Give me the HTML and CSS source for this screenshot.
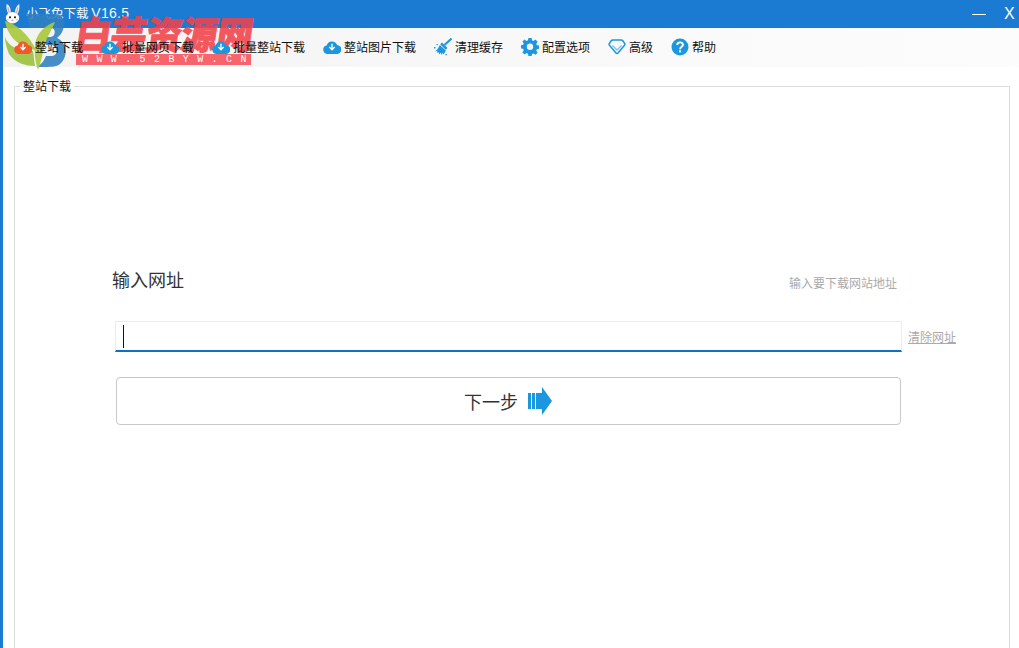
FILE: index.html
```html
<!DOCTYPE html>
<html lang="zh">
<head>
<meta charset="utf-8">
<title>小飞兔下载</title>
<link rel="stylesheet" href="styles.css">
</head>
<body>
<div class="app">
  <header class="titlebar">
    <div class="title-left">
      <svg class="rabbit" width="17" height="20" viewBox="0 0 20 24">
        <path d="M5 12C3 8 2 4 3 0c3 1 5 5 5 10zM13 10c0-4 2-8 5-10 1 4 0 9-2 12z" fill="#e8eef6"/>
        <path d="M4.500 4c.2 2 1 4.500 2 6.500M16.500 4c-.5 2-1 4.500-2 6.500" stroke="#d99bb0" stroke-width="1.300" fill="none"/>
        <ellipse cx="10" cy="16.500" rx="8" ry="7" fill="#fff"/>
        <circle cx="7" cy="16" r="1.300" fill="#222"/>
        <circle cx="13" cy="16" r="1.300" fill="#222"/>
        <ellipse cx="10" cy="19.500" rx="1.500" ry="1" fill="#e79ab0"/>
        <ellipse cx="4.500" cy="19" rx="1.500" ry="1" fill="#f4c6d2"/>
        <ellipse cx="15.500" cy="19" rx="1.500" ry="1" fill="#f4c6d2"/>
      </svg>
      <span class="title-text">小飞兔下载 <span class="title-ver">V16.5</span></span>
    </div>
    <div class="window-controls">
      <span class="minimize"></span>
      <span class="close">X</span>
    </div>
  </header>

  <div class="body-wrap">
    <nav class="toolbar">
      <a class="tool">
        <svg class="icon" width="18" height="14" viewBox="0 0 17 13"><path d="M4 13a4 4 0 0 1-.6-7.900A5.200 5.200 0 0 1 13.300 4.600 4.200 4.200 0 0 1 13 13z" fill="#ef5a2c"/><path d="M8.500 3.500v5M6 6.500l2.500 2.700L11 6.500" stroke="#fff" stroke-width="1.300" fill="none"/></svg>
        整站下载
      </a>
      <a class="tool">
        <svg class="icon" width="18" height="14" viewBox="0 0 17 13"><path d="M4 13a4 4 0 0 1-.6-7.900A5.200 5.200 0 0 1 13.300 4.600 4.200 4.200 0 0 1 13 13z" fill="#1b97e0"/><path d="M8.500 3.500v5M6 6.500l2.500 2.700L11 6.500" stroke="#fff" stroke-width="1.300" fill="none"/></svg>
        批量网页下载
      </a>
      <a class="tool">
        <svg class="icon" width="18" height="14" viewBox="0 0 17 13"><path d="M4 13a4 4 0 0 1-.6-7.900A5.200 5.200 0 0 1 13.300 4.600 4.200 4.200 0 0 1 13 13z" fill="#1b97e0"/><path d="M8.500 3.500v5M6 6.500l2.500 2.700L11 6.500" stroke="#fff" stroke-width="1.300" fill="none"/></svg>
        批量整站下载
      </a>
      <a class="tool">
        <svg class="icon" width="18" height="14" viewBox="0 0 17 13"><path d="M4 13a4 4 0 0 1-.6-7.900A5.200 5.200 0 0 1 13.300 4.600 4.200 4.200 0 0 1 13 13z" fill="#1b97e0"/><path d="M8.500 3.500v5M6 6.500l2.500 2.700L11 6.500" stroke="#fff" stroke-width="1.300" fill="none"/></svg>
        整站图片下载
      </a>
      <a class="tool">
        <svg class="icon" width="18" height="18" viewBox="0 0 18 18">
          <path d="M17.500 .5l-7 6.500" stroke="#1b97e0" stroke-width="2"/>
          <path d="M8 4.500l5.500 5.500-1.800 1.800-5.500-5.500z" fill="#1b97e0"/>
          <path d="M5.800 7l6 5.500c-.5 1.500-1.300 2.700-2.300 4l-1-2-.7 2.500-1.500-2.500-.6 2-1.500-2.500-1.400 1 .5-2.300L1 13.500C3 12 4.800 9.500 5.800 7z" fill="#1b97e0"/>
          <rect x="0" y="9" width="1.500" height="1.500" fill="#1b97e0"/>
          <rect x="2.500" y="6" width="1.300" height="1.300" fill="#1b97e0"/>
          <rect x="11.500" y="16" width="1.300" height="1.300" fill="#1b97e0"/>
        </svg>
        清理缓存
      </a>
      <a class="tool">
        <svg class="icon" width="18" height="18" viewBox="0 0 17 17"><path d="M7 0h3l.4 2.200 1.400.6L13.700 1.500l2 2-1.300 1.900.6 1.400 2 .4v3l-2 .4-.6 1.400 1.300 1.900-2 2-1.900-1.300-1.400.6L10 17H7l-.4-2.200-1.400-.6-1.900 1.300-2-2 1.300-1.900-.6-1.400L0 9.800v-3l2-.4.600-1.400L1.300 3.500l2-2 1.900 1.300 1.400-.6z" fill="#1b97e0"/><circle cx="8.500" cy="8.300" r="3" fill="#f6f6f6"/></svg>
        配置选项
      </a>
      <a class="tool">
        <svg class="icon" width="18" height="16" viewBox="0 0 18 16"><path d="M5 1h8c1 0 1.500.3 2 1l1.500 2.200c.6.800.5 1.500 0 2.100L10 14c-.6.700-1.400.7-2 0L1.500 6.300C1 5.700.9 5 1.500 4.200L3 2c.5-.7 1-1 2-1z" fill="none" stroke="#1b97e0" stroke-width="1.500"/><path d="M4.500 6.500L9 11l4.500-4.500" fill="none" stroke="#7cc4ee" stroke-width="1.300"/></svg>
        高级
      </a>
      <a class="tool">
        <svg class="icon" width="18" height="18" viewBox="0 0 18 18"><circle cx="9" cy="9" r="8.500" fill="#1b97e0"/><path d="M6.200 7c0-3.500 5.800-3.500 5.800-.2 0 2.100-2.900 2-2.900 4.400" fill="none" stroke="#fff" stroke-width="1.900"/><rect x="8" y="12.300" width="2.100" height="2.100" fill="#fff"/></svg>
        帮助
      </a>
    </nav>

    <main class="content">
      <fieldset class="panel">
        <legend class="panel-legend">整站下载</legend>
        <div class="form">
          <div class="form-head">
            <span class="form-label">输入网址</span>
            <span class="form-hint">输入要下载网站地址</span>
          </div>
          <div class="url-row">
            <div class="url-input"><span class="caret"></span></div>
            <a class="clear-link">清除网址</a>
          </div>
          <button class="next-btn" type="button">
            <span>下一步</span>
            <svg width="24" height="28" viewBox="0 0 24 28"><path d="M0 6h3v16H0zM4 6h3v16H4zM8 6h6V0l10 14-10 14v-6H8z" fill="#1b97e0"/></svg>
          </button>
        </div>
      </fieldset>
    </main>
  </div>
</div>

<div class="watermark">
  <svg class="wm-logo" width="72" height="72" viewBox="0 0 72 72">
    <path d="M26 14h30c10 0 11 17 1 24 11 5 11 20 3 26-4 3-8 3-24 3 5-2 8-6 10-11h6c6 0 6-10 0-11h-6v-8h5c5-1 5-9 0-9H30z" fill="#2f7fc0" fill-opacity=".88"/>
    <path d="M5 21c12 3 24 14 31 29-3 0-6-1-8-3C20 46 8 38 5 21z" fill="#a9c93f" fill-opacity=".92"/>
    <path d="M55 22c-3 8-9 16-11 26-2 7-3 15-6 22-3-8-4-18-3-26 2-11 10-19 20-22z" fill="#a9c93f" fill-opacity=".92"/>
    <path d="M5 37c3 9 13 14 28 14 1 5 1 10 2 15-9 0-20-3-26-12-2-5-4-11-4-17z" fill="#97bf38" fill-opacity=".88"/>
  </svg>
  <div class="wm-text">
    <div class="wm-title">白芸资源网</div>
    <div class="wm-url">WWW.52BYW.CN</div>
  </div>
</div>
</body>
</html>
```
FILE: styles.css
```css
* { box-sizing: border-box; }
html, body { margin: 0; height: 100%; overflow: hidden; background: #fff; }
body { font-family: "Noto Sans CJK SC", "Liberation Sans", sans-serif; position: relative; }

.app { height: 648px; display: flex; flex-direction: column; }

.titlebar {
  height: 28px; flex: none; background: #1b7bd3; color: #fff;
  display: flex; justify-content: space-between; align-items: center;
}
.title-left { display: flex; align-items: center; padding-left: 4px; gap: 5px; }
.title-text { font-size: 12.500px; color: #f2f7fc; line-height: 26px; height: 28px; }
.title-ver { font-size: 14px; font-family: "Liberation Sans", sans-serif; letter-spacing: .300px; }
.window-controls { display: flex; align-items: center; }
.minimize { width: 14px; height: 1px; background: #fff; margin-right: 18px; }
.close { font: 16px "Liberation Sans", sans-serif; width: 15px; color: #fff; }

.body-wrap { flex: 1; border-left: 3px solid #1b7bd3; display: flex; flex-direction: column; min-height: 0; }

.toolbar {
  height: 39px; flex: none; background: linear-gradient(90deg, #f3f3f3, #fafafa 70%, #fcfcfc);
  display: flex; align-items: center; padding: 0 0 2px 11px; gap: 18px;
}
.tool { position: relative; z-index: 2; display: flex; align-items: center; gap: 3px; font-size: 12px; color: #111; white-space: nowrap; line-height: 18px; }
.icon { flex: none; display: block; }

.content { flex: 1; min-height: 0; padding: 11px 9px 0 11px; background: #fff; }
.panel { margin: 0; padding: 0; border: 1px solid #dcdcdc; height: 600px; min-width: 0; }
.panel-legend { font-size: 12px; color: #111; padding: 0 3px; margin-left: 5px; line-height: 16px; }

.form { width: 789px; margin: 167px 0 0 97px; }
.form-head { display: flex; justify-content: space-between; align-items: center; height: 38px; padding-right: 4px; }
.form-label { font-size: 18px; color: #333; margin-bottom: 3px; }
.form-hint { font-size: 12px; color: #aaa; margin-top: 5px; }

.url-row { display: flex; align-items: center; gap: 6px; margin: 22px 0 0 3px; width: 844px; }
.url-input {
  width: 787px; height: 31px; flex: none; background: #fff;
  border: 1px solid #ececec; border-bottom: 2px solid #0e70c4;
  display: flex; align-items: center; padding-left: 7px;
}
.caret { width: 1px; height: 23px; background: #111; }
.clear-link { font-size: 12px; color: #aaa; text-decoration: underline; white-space: nowrap; }

.next-btn {
  display: flex; width: 785px; height: 48px; margin: 25px 0 0 4px;
  background: #fff; border: 1px solid #c8c8c8; border-radius: 4px;
  justify-content: center; align-items: center; gap: 10px;
  font-family: inherit; font-size: 18px; color: #333; padding: 0 1px 0 0;
}

.watermark { position: absolute; left: 0; top: 0; width: 260px; height: 72px; z-index: 1; pointer-events: none; }
.wm-logo { position: absolute; left: 0; top: 0; }
.wm-text { position: absolute; left: 76px; top: 10px; width: 175px; }
.wm-title {
  font-size: 36px; line-height: 44px; height: 44px; font-weight: 900; color: #f2424a; opacity: .88;
  white-space: nowrap; transform: skewX(-8deg) scaleY(1.05);
  letter-spacing: -.600px; -webkit-text-stroke: 1px #f2424a;
}
.wm-url {
  height: 11px; background: rgba(247, 80, 88, .88); color: #fff;
  font: 10px/11px "Liberation Mono", monospace; letter-spacing: 8.400px; padding-left: 6px; white-space: nowrap;
}
```
